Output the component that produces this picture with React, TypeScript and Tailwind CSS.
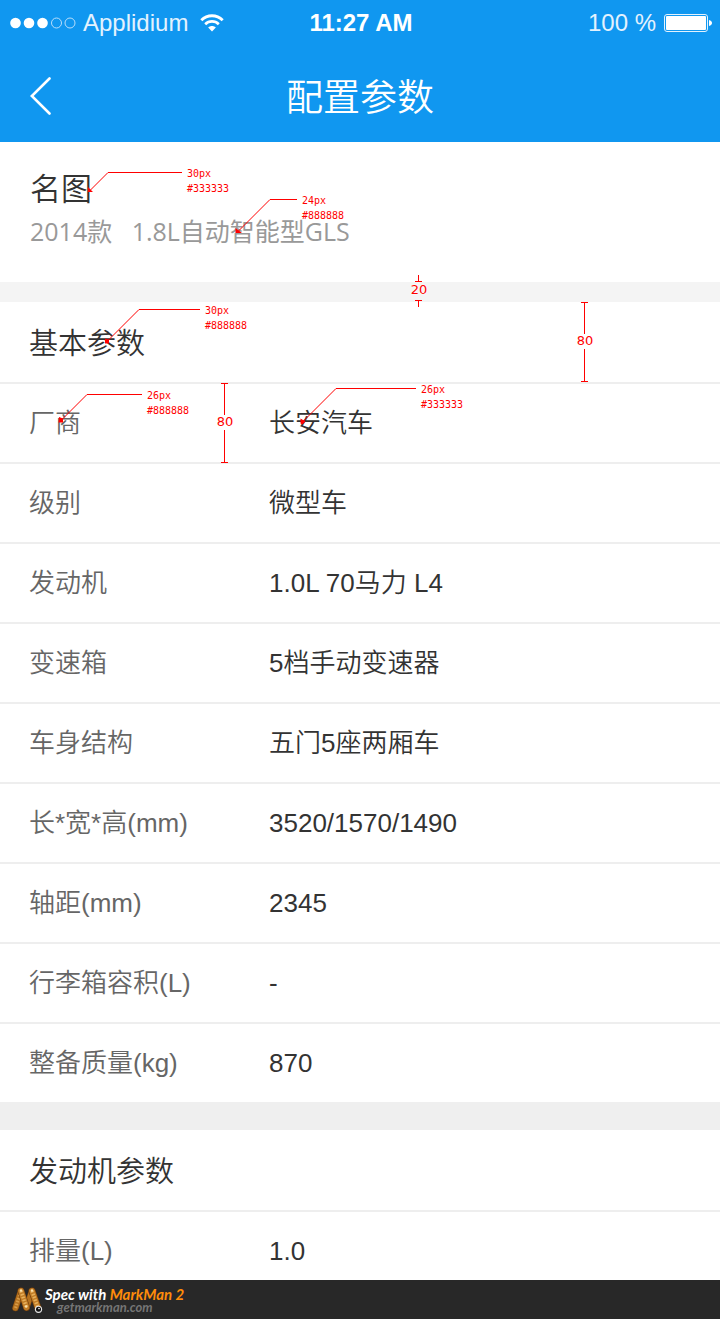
const BASIC: [string, string][] = [
  ["厂商", "长安汽车"],
  ["级别", "微型车"],
  ["发动机", "1.0L 70马力 L4"],
  ["变速箱", "5档手动变速器"],
  ["车身结构", "五门5座两厢车"],
  ["长*宽*高(mm)", "3520/1570/1490"],
  ["轴距(mm)", "2345"],
  ["行李箱容积(L)", "-"],
  ["整备质量(kg)", "870"],
];

const ENGINE: [string, string][] = [["排量(L)", "1.0"]];

function StatusBar() {
  return (
    <div className="grid h-[46px] grid-cols-[1fr_auto_1fr] items-center pr-2 pl-[10px] text-2xl leading-none text-white">
      <div className="flex items-center gap-[7px]">
        <svg className="h-3 w-[66px]" viewBox="0 0 66 12" aria-hidden="true">
          <circle cx="5.5" cy="6" r="5.3" fill="#fff" />
          <circle cx="19" cy="6" r="5.3" fill="#fff" />
          <circle cx="32.5" cy="6" r="5.3" fill="#fff" />
          <circle cx="46.5" cy="6" r="5" fill="none" stroke="#b8defb" strokeWidth="1" />
          <circle cx="60" cy="6" r="5" fill="none" stroke="#b8defb" strokeWidth="1" />
        </svg>
        <span className="text-[#e3f2fe]">Applidium</span>
        <svg className="ml-[5px] h-[18px] w-6" viewBox="0 0 24 18" fill="none" aria-hidden="true">
          <path d="M1.3 6.2C7.4.2 16.6.2 22.7 6.2" stroke="#fff" strokeWidth="2.9" />
          <path d="M5.2 10.2C9 6.5 15 6.5 18.8 10.2" stroke="#fff" strokeWidth="2.7" />
          <path d="M12 17.6 8.2 13.5C10.3 11.5 13.7 11.5 15.8 13.5Z" fill="#fff" />
        </svg>
      </div>
      <span className="font-bold">11:27 AM</span>
      <div className="flex items-center justify-end gap-2">
        <span className="text-[#e3f2fe]">100 %</span>
        <svg className="h-[18px] w-12" viewBox="0 0 48 18" aria-hidden="true">
          <rect x=".5" y=".5" width="43" height="17" rx="2.5" fill="none" stroke="#e3f2fe" />
          <rect x="2" y="2" width="40" height="14" rx="1" fill="#fff" />
          <path d="M45 6c4 1 4 5 0 6z" fill="#fff" />
        </svg>
      </div>
    </div>
  );
}

function SpecSection({ title, rows }: { title: string; rows: [string, string][] }) {
  return (
    <section>
      <h2 className="flex h-[82px] items-center border-b-2 border-[#eeeeee] px-[29px] pt-[5px] text-[29px] font-[350] text-[#333333]">
        {title}
      </h2>
      <table className="w-full border-separate border-spacing-0 text-left text-[26px] leading-8 font-[350]">
        <tbody>
          {rows.map(([label, value]) => (
            <tr key={label} className="group">
              <th
                scope="row"
                className="h-20 w-[269px] border-b-2 border-[#eeeeee] p-0 pl-[29px] font-[350] text-[#666666] group-last:h-[78px] group-last:border-b-0"
              >
                {label}
              </th>
              <td className="border-b-2 border-[#eeeeee] p-0 text-[#333333] group-last:border-b-0">{value}</td>
            </tr>
          ))}
        </tbody>
      </table>
    </section>
  );
}

const NOTE =
  "absolute font-['DejaVu_Sans_Mono',monospace] text-[10px] leading-[15px] whitespace-pre text-[#ff0000]";
const SIZE =
  "absolute w-5 text-center font-['DejaVu_Sans',sans-serif] text-[13px] leading-4 text-[#ff0000] [text-shadow:0_0_2px_#fff,0_0_2px_#fff]";

function Annotations() {
  return (
    <div className="pointer-events-none absolute inset-0">
      <svg className="absolute top-0 left-0 h-[480px] w-[720px]" viewBox="0 0 720 480" fill="none" stroke="#ff0000" aria-hidden="true">
        <path d="M90 190.5 108 172.5H182M237 232.5 270 199.5H297M107 341.5 139 309.5H200M61 420.5 87 394.5H142M303 421.5 336 388.5H416" />
        <path
          d="M88 187v5h5zM235.5 228v5h6.5zM105 338.5l4 1 0 4-4 0zM59 417l4 1.5v4h-4.5zM300.5 418.5l5 3-3 3-2-1z"
          fill="#ff0000"
          stroke="none"
        />
        <path d="M418.5 275V281.5M415 281.5H422M415 300.5H422M418.5 300.5V307" />
        <path d="M581 302.5H588M584.5 302.5V334M584.5 349V381.5M581 381.5H588" />
        <path d="M221 383.5H228M224.5 383.5V415M224.5 430V462.5M221 462.5H228" />
      </svg>
      <p className={`${NOTE} top-[166px] left-[187px]`}>{"30px\n#333333"}</p>
      <p className={`${NOTE} top-[193px] left-[302px]`}>{"24px\n#888888"}</p>
      <p className={`${NOTE} top-[303px] left-[205px]`}>{"30px\n#888888"}</p>
      <p className={`${NOTE} top-[388px] left-[147px]`}>{"26px\n#888888"}</p>
      <p className={`${NOTE} top-[382px] left-[421px]`}>{"26px\n#333333"}</p>
      <span className={`${SIZE} top-[282px] left-[409px]`}>20</span>
      <span className={`${SIZE} top-[333px] left-[575px]`}>80</span>
      <span className={`${SIZE} top-[414px] left-[215px]`}>80</span>
    </div>
  );
}

function MarkManLogo() {
  return (
    <svg className="h-7 w-8" viewBox="0 0 32 28" fill="none" strokeLinecap="round" aria-hidden="true">
      <path d="M3.500 22 9 5" stroke="#7a430f" strokeWidth="6.500" />
      <path d="M3.500 22 9 5" stroke="#b5721f" strokeWidth="5.500" />
      <path d="M3.500 22 9 5" stroke="#d99c48" strokeWidth="3" strokeDasharray="1.600 1.400" strokeLinecap="butt" />
      <path d="M14.500 21.500 20 5" stroke="#7a430f" strokeWidth="6.500" />
      <path d="M14.500 21.500 20 5" stroke="#b5721f" strokeWidth="5.500" />
      <path d="M9 5 14.500 21.500M20 5 26 22" stroke="#6b3a0c" strokeWidth="7" />
      <path d="M9 5 14.500 21.500M20 5 26 22" stroke="#c07c26" strokeWidth="5.800" />
      <path d="M9 5 14.500 21.500M20 5 26 22" stroke="#e6b05c" strokeWidth="3.500" strokeDasharray="1.600 1.400" strokeLinecap="butt" />
      <circle cx="9" cy="4.500" r="1.200" fill="#fbe3ae" />
      <circle cx="20" cy="4.500" r="1.200" fill="#fbe3ae" />
      <circle cx="14.200" cy="20.500" r="1.300" fill="#fbe3ae" />
      <circle cx="26.500" cy="23.300" r="3.600" fill="#e9e9e9" />
      <circle cx="26.500" cy="23.300" r="2.500" fill="#111" />
      <circle cx="27" cy="22.600" r=".8" fill="#fff" />
    </svg>
  );
}

export default function App() {
  return (
    <div className="relative min-h-screen overflow-hidden bg-white font-['Liberation_Sans','Noto_Sans_CJK_SC',sans-serif]" lang="zh-CN">
      <header className="bg-[#1097f0] text-white">
        <StatusBar />
        <div className="grid h-24 grid-cols-[1fr_auto_1fr] items-center px-[30px] pt-1">
          <button type="button" aria-label="返回" className="justify-self-start">
            <svg className="h-10 w-[22px]" viewBox="0 0 22 40" fill="none" stroke="#fff" strokeWidth="2.6" strokeLinecap="round" aria-hidden="true">
              <path d="M19.5 2.5 1.8 20 19.5 37.5" />
            </svg>
          </button>
          <h1 className="pt-[5px] text-[37px] leading-none font-[350]">配置参数</h1>
        </div>
      </header>
      <main>
        <div className="h-[140px] px-[30px] pt-[23px] font-['Open_Sans','Noto_Sans_CJK_SC',sans-serif]">
          <h2 className="text-[31px] leading-[46px] font-[350] text-[#333333]">名图</h2>
          <p className="text-[25px] leading-10 whitespace-pre text-[#999999]">{"2014款   1.8L自动智能型GLS"}</p>
        </div>
        <div className="h-5 bg-[#f4f4f4]" />
        <SpecSection title="基本参数" rows={BASIC} />
        <div className="h-7 bg-[#efefef]" />
        <SpecSection title="发动机参数" rows={ENGINE} />
      </main>
      <footer className="relative -mt-[10px] flex h-[39px] items-center gap-px bg-[#282828] pl-3 font-['Lato',sans-serif] font-bold italic">
        <MarkManLogo />
        <div className="pb-0.5">
          <p className="text-[15px] leading-4 text-white">
            Spec with <span className="text-[#ff8c0a]">MarkMan 2</span>
          </p>
          <p className="pl-3 text-[13px] leading-[10px] text-[#757575]">getmarkman.com</p>
        </div>
      </footer>
      <Annotations />
    </div>
  );
}
